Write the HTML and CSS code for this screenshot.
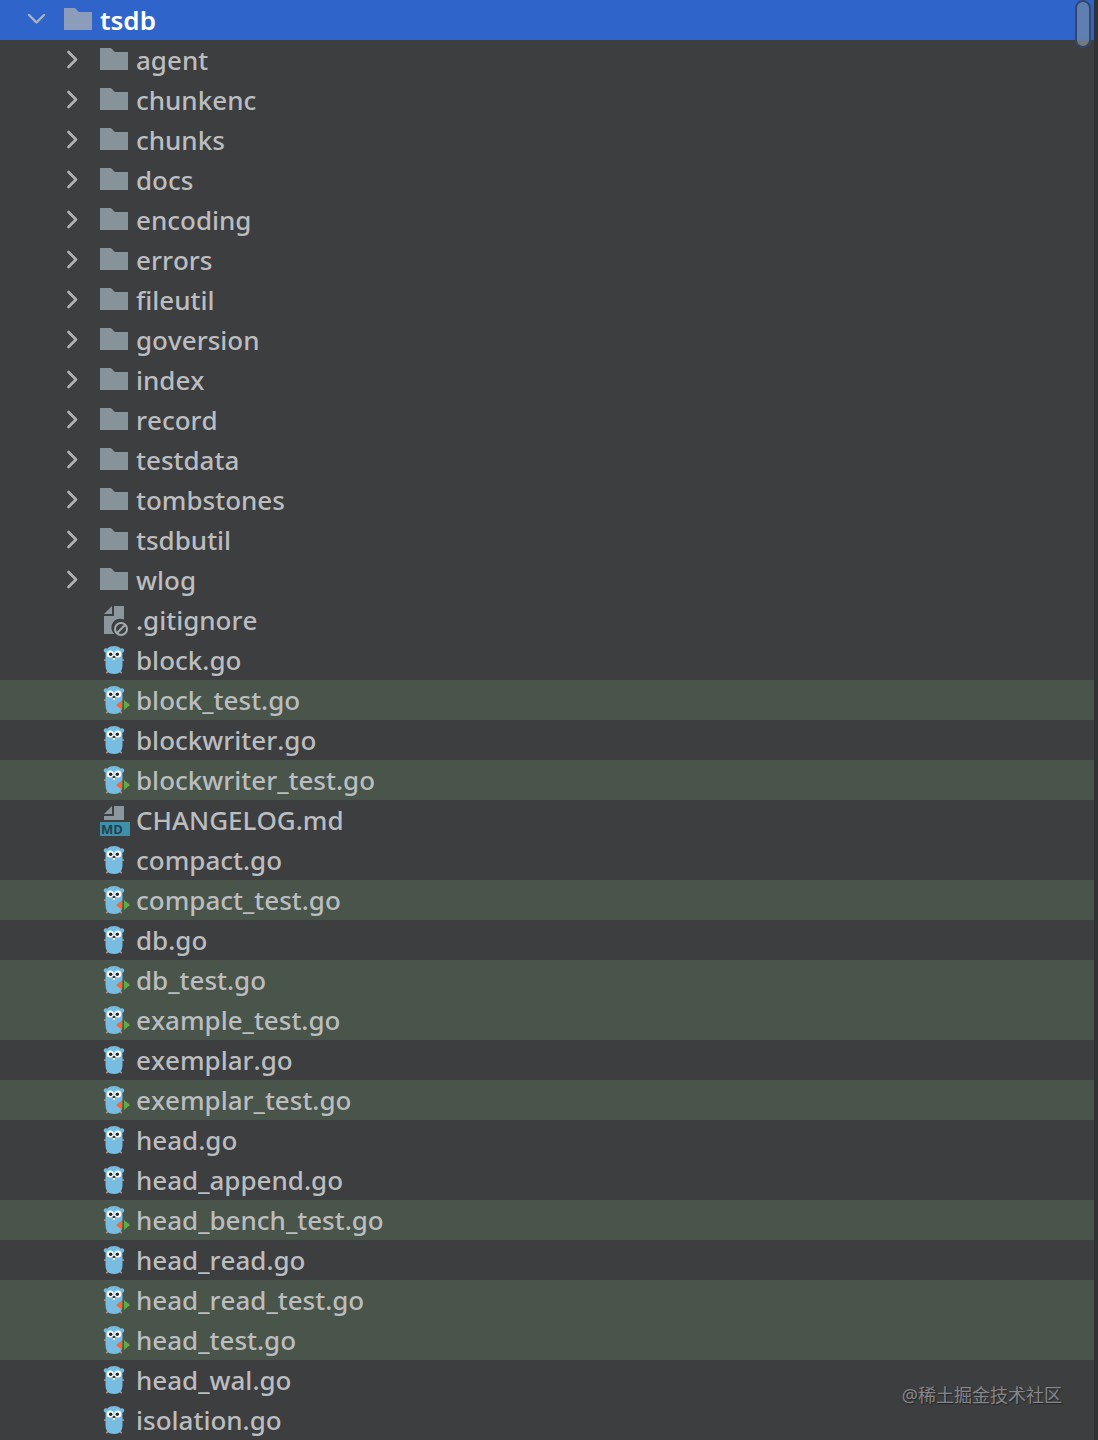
FILE: index.html
```
<!DOCTYPE html>
<html lang="en">
<head>
    <meta charset="UTF-8">
    <meta name="viewport" content="width=device-width, initial-scale=1.0">
    <title>tsdb</title>
    <link rel="stylesheet" href="styles.css">
</head>
<body>

    <!-- icon definitions -->
    <svg class="defs" aria-hidden="true">
        <symbol id="down" viewBox="0 0 28 28">
            <path d="M7 9l7.500 7.500L22 9" fill="none" stroke="currentColor" stroke-width="2.4" stroke-linecap="round" stroke-linejoin="round"/>
        </symbol>
        <symbol id="right" viewBox="0 0 28 28">
            <path d="M10.500 6l7.500 7.500L10.500 21" fill="none" stroke="currentColor" stroke-width="2.6" stroke-linecap="round" stroke-linejoin="round"/>
        </symbol>
        <symbol id="folder" viewBox="0 0 32 32">
            <path d="M0 4h9.500c1.600 0 2.400.6 3.200 1.700L14.800 8H28v18H0z" fill="currentColor"/>
        </symbol>
        <symbol id="ignore" viewBox="0 0 32 32">
            <path d="M12 2v8H4z" fill="#8b979d"/>
            <path d="M14 2h10v13.600a8.800 8.800 0 0 0-9.800 14.400H4V12h10z" fill="#8b979d"/>
            <circle cx="21" cy="25" r="6" fill="none" stroke="#a5abae" stroke-width="2"/>
            <path d="M17 29l8-8" stroke="#a5abae" stroke-width="2"/>
        </symbol>
        <symbol id="md" viewBox="0 0 32 32">
            <path d="M12 2v8H4z" fill="#8b979d"/>
            <path d="M14 2h10v14H4v-4h10z" fill="#8b979d"/>
            <path d="M0 18h30v14H0z" fill="#3f91ab"/>
            <text x="1" y="29.500" class="md-label">MD</text>
        </symbol>
        <symbol id="go" viewBox="0 0 32 32">
            <path d="M4 16.200h3M21 16.200h3M6.300 29.200l2.200-2.200M21.700 29.200l-2.200-2.200" stroke="#a98d80" stroke-width="1.800"/>
            <circle cx="6" cy="6.500" r="2.200" fill="#78bce1"/>
            <circle cx="22" cy="6.500" r="2.200" fill="#78bce1"/>
            <path d="M5.500 10.500C5.500 5 8.500 2 14 2s8.500 3 8.500 8.500V21c0 6-3 9-8.500 9s-8.500-3-8.500-9z" fill="#78bce1"/>
            <circle cx="10.200" cy="10" r="3.500" fill="#fff"/>
            <circle cx="17.800" cy="10" r="3.500" fill="#fff"/>
            <circle cx="10.700" cy="10.200" r="1.700" fill="#1f2528"/>
            <circle cx="17.300" cy="10.200" r="1.700" fill="#1f2528"/>
            <path d="M13 13.500h2v2.500h-2z" fill="#fff"/>
            <ellipse cx="14" cy="13" rx="1.500" ry="1.100" fill="#2c2b2b"/>
        </symbol>
        <symbol id="gotest" viewBox="0 0 32 32">
            <use href="#go"/>
            <path d="M22.500 16v10L16 21z" fill="#ee6a35"/>
            <path d="M22.500 15v12H24V15z" fill="#49544a"/>
            <path d="M24 16l6 5-6 5z" fill="#5aae3f"/>
        </symbol>
    </svg>

    <div class="panel">
        <ul class="tree">
            <li>
                <div class="row selected"><button class="toggle" aria-label="Collapse tsdb"><svg><use href="#down"/></svg></button><svg class="icon"><use href="#folder"/></svg><span>tsdb</span></div>
                <ul class="children">
                    <li class="row"><button class="toggle" aria-label="Expand agent"><svg><use href="#right"/></svg></button><svg class="icon"><use href="#folder"/></svg><span>agent</span></li>
                    <li class="row"><button class="toggle" aria-label="Expand chunkenc"><svg><use href="#right"/></svg></button><svg class="icon"><use href="#folder"/></svg><span>chunkenc</span></li>
                    <li class="row"><button class="toggle" aria-label="Expand chunks"><svg><use href="#right"/></svg></button><svg class="icon"><use href="#folder"/></svg><span>chunks</span></li>
                    <li class="row"><button class="toggle" aria-label="Expand docs"><svg><use href="#right"/></svg></button><svg class="icon"><use href="#folder"/></svg><span>docs</span></li>
                    <li class="row"><button class="toggle" aria-label="Expand encoding"><svg><use href="#right"/></svg></button><svg class="icon"><use href="#folder"/></svg><span>encoding</span></li>
                    <li class="row"><button class="toggle" aria-label="Expand errors"><svg><use href="#right"/></svg></button><svg class="icon"><use href="#folder"/></svg><span>errors</span></li>
                    <li class="row"><button class="toggle" aria-label="Expand fileutil"><svg><use href="#right"/></svg></button><svg class="icon"><use href="#folder"/></svg><span>fileutil</span></li>
                    <li class="row"><button class="toggle" aria-label="Expand goversion"><svg><use href="#right"/></svg></button><svg class="icon"><use href="#folder"/></svg><span>goversion</span></li>
                    <li class="row"><button class="toggle" aria-label="Expand index"><svg><use href="#right"/></svg></button><svg class="icon"><use href="#folder"/></svg><span>index</span></li>
                    <li class="row"><button class="toggle" aria-label="Expand record"><svg><use href="#right"/></svg></button><svg class="icon"><use href="#folder"/></svg><span>record</span></li>
                    <li class="row"><button class="toggle" aria-label="Expand testdata"><svg><use href="#right"/></svg></button><svg class="icon"><use href="#folder"/></svg><span>testdata</span></li>
                    <li class="row"><button class="toggle" aria-label="Expand tombstones"><svg><use href="#right"/></svg></button><svg class="icon"><use href="#folder"/></svg><span>tombstones</span></li>
                    <li class="row"><button class="toggle" aria-label="Expand tsdbutil"><svg><use href="#right"/></svg></button><svg class="icon"><use href="#folder"/></svg><span>tsdbutil</span></li>
                    <li class="row"><button class="toggle" aria-label="Expand wlog"><svg><use href="#right"/></svg></button><svg class="icon"><use href="#folder"/></svg><span>wlog</span></li>
                    <li class="row file"><svg class="icon"><use href="#ignore"/></svg><span>.gitignore</span></li>
                    <li class="row file"><svg class="icon"><use href="#go"/></svg><span>block.go</span></li>
                    <li class="row file test"><svg class="icon"><use href="#gotest"/></svg><span>block_test.go</span></li>
                    <li class="row file"><svg class="icon"><use href="#go"/></svg><span>blockwriter.go</span></li>
                    <li class="row file test"><svg class="icon"><use href="#gotest"/></svg><span>blockwriter_test.go</span></li>
                    <li class="row file"><svg class="icon"><use href="#md"/></svg><span>CHANGELOG.md</span></li>
                    <li class="row file"><svg class="icon"><use href="#go"/></svg><span>compact.go</span></li>
                    <li class="row file test"><svg class="icon"><use href="#gotest"/></svg><span>compact_test.go</span></li>
                    <li class="row file"><svg class="icon"><use href="#go"/></svg><span>db.go</span></li>
                    <li class="row file test"><svg class="icon"><use href="#gotest"/></svg><span>db_test.go</span></li>
                    <li class="row file test"><svg class="icon"><use href="#gotest"/></svg><span>example_test.go</span></li>
                    <li class="row file"><svg class="icon"><use href="#go"/></svg><span>exemplar.go</span></li>
                    <li class="row file test"><svg class="icon"><use href="#gotest"/></svg><span>exemplar_test.go</span></li>
                    <li class="row file"><svg class="icon"><use href="#go"/></svg><span>head.go</span></li>
                    <li class="row file"><svg class="icon"><use href="#go"/></svg><span>head_append.go</span></li>
                    <li class="row file test"><svg class="icon"><use href="#gotest"/></svg><span>head_bench_test.go</span></li>
                    <li class="row file"><svg class="icon"><use href="#go"/></svg><span>head_read.go</span></li>
                    <li class="row file test"><svg class="icon"><use href="#gotest"/></svg><span>head_read_test.go</span></li>
                    <li class="row file test"><svg class="icon"><use href="#gotest"/></svg><span>head_test.go</span></li>
                    <li class="row file"><svg class="icon"><use href="#go"/></svg><span>head_wal.go</span></li>
                    <li class="row file"><svg class="icon"><use href="#go"/></svg><span>isolation.go</span></li>
                </ul>
            </li>
        </ul>
        <div class="scroll-thumb"></div>
        <div class="watermark">@稀土掘金技术社区</div>
    </div>

</body>
</html>
```
FILE: styles.css
```
* {
    box-sizing: border-box;
}

body {
    margin: 0;
    background-color: #3d3e40;
    color: #bbbdbf;
    font-family: "Noto Sans", "Open Sans", sans-serif;
    font-size: 26px;
    font-weight: 500;
    font-kerning: none;
    line-height: 40px;
}

.defs {
    display: none;
}

.panel {
    position: relative;
    border-right: 4px solid #313234;
}

.tree,
.children {
    list-style: none;
    margin: 0;
    padding: 0;
}

.row {
    display: flex;
    align-items: center;
    height: 40px;
    padding-left: 22px;
    white-space: nowrap;
}

.children .row {
    padding-left: 58px;
}

.children .file {
    padding-left: 100px;
}

.row.selected {
    background-color: #2f65ca;
    color: #fff;
    font-weight: 600;
}

.row.test {
    background-color: #49544a;
}

/* expand / collapse arrow */
.toggle {
    width: 28px;
    height: 28px;
    margin-right: 14px;
    padding: 0;
    border: none;
    background: none;
    color: #b0b3b5;
    cursor: pointer;
}

.toggle svg {
    display: block;
    width: 28px;
    height: 28px;
}

.icon {
    flex: none;
    width: 32px;
    height: 32px;
    margin-right: 4px;
    color: #87939a;
}

.selected .icon {
    color: #8b9dbb;
}

.md-label {
    font-family: "Noto Sans", sans-serif;
    font-size: 13px;
    font-weight: bold;
    fill: #24414d;
}

.scroll-thumb {
    position: absolute;
    top: 0;
    right: 3px;
    width: 16px;
    height: 48px;
    border: 2px solid #36466a;
    border-radius: 8px;
    background: linear-gradient(to bottom, #5f7fb2 36px, #737978 40px);
}

.watermark {
    position: absolute;
    right: 32px;
    bottom: 32px;
    color: #85878a;
    font-family: "Noto Sans", "Noto Sans CJK SC", sans-serif;
    font-size: 18px;
    font-weight: normal;
    line-height: 26px;
    text-shadow: 1px 1px 1px #222;
}
```
